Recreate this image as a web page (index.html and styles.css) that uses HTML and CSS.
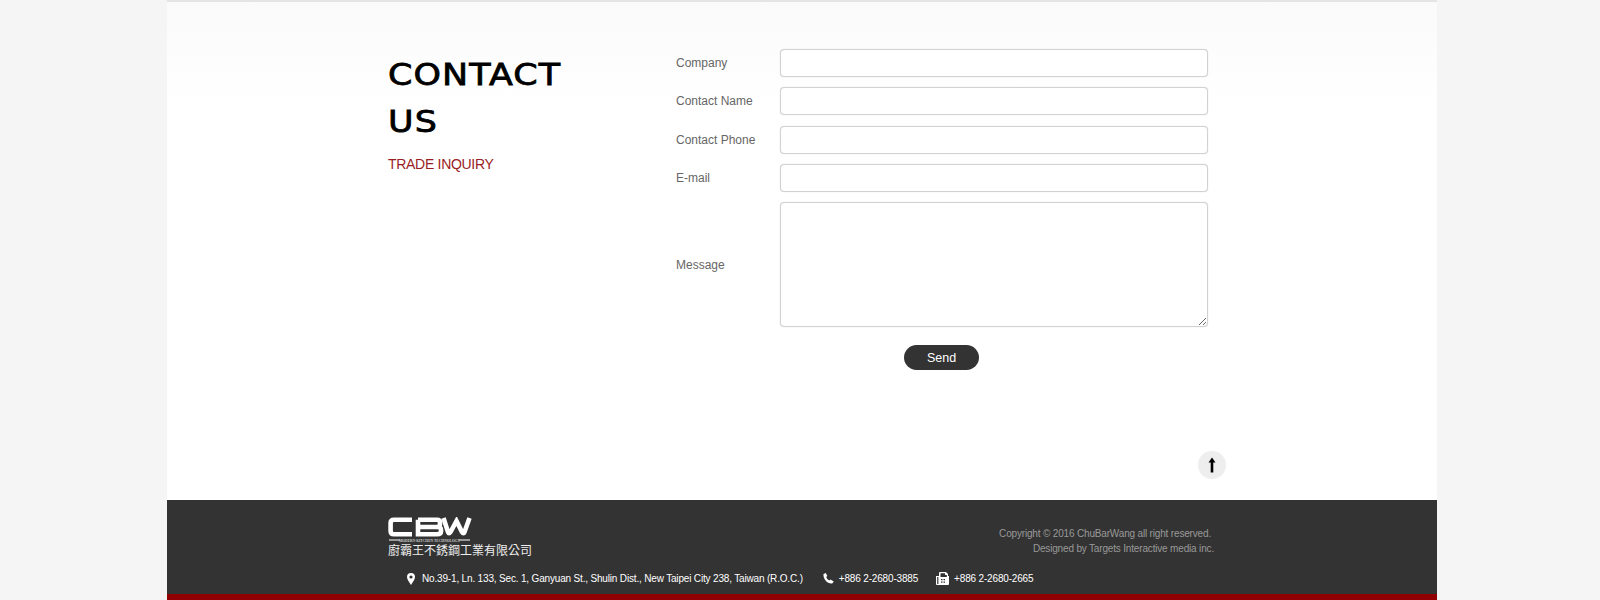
FILE: index.html
```html
<!DOCTYPE html>
<html lang="en">
<head>
    <meta charset="UTF-8">
    <title>Contact Us</title>
    <link rel="stylesheet" href="styles.css">
</head>
<body>

<div class="wrap">
    <div class="content">
        <div class="intro">
            <h1>CONTACT<br>US</h1>
            <p class="sub">TRADE INQUIRY</p>
        </div>
        <form class="form">
            <div class="row">
                <label>Company</label>
                <input type="text">
            </div>
            <div class="row">
                <label>Contact Name</label>
                <input type="text">
            </div>
            <div class="row">
                <label>Contact Phone</label>
                <input type="text">
            </div>
            <div class="row">
                <label>E-mail</label>
                <input type="text">
            </div>
            <div class="row">
                <label>Message</label>
                <textarea></textarea>
            </div>
            <div class="actions">
                <button type="button" class="send">Send</button>
            </div>
        </form>
    </div>
    <div class="top-row">
        <a class="to-top">
            <svg width="8" height="16" viewBox="0 0 8 16">
                <path d="M4 0.500 L7.500 5.500 L5.300 5.500 L5.300 15.500 L2.700 15.500 L2.700 5.500 L0.500 5.500 Z" fill="#000"/>
            </svg>
        </a>
    </div>
    <footer class="footer">
        <div class="footer-top">
            <div class="brand">
                <svg class="logo" width="84" height="26" viewBox="0 0 84 26">
                    <g fill="none" stroke="#fff" stroke-width="4.600">
                        <path d="M24 2.800 H6 Q2.600 2.800 2.600 6 V14 Q2.600 17.200 6 17.200 H24"/>
                        <path d="M30 2.800 H49 Q52 2.800 52 5.500 V7 Q52 10 49 10 H32 M49 10 Q53 10 53 12.500 V14.500 Q53 17.200 49 17.200 H30 V2.800"/>
                        <path d="M55.500 1 L60 15 Q60.800 17.400 62.500 15 L68.500 4 L74 15 Q75.500 17.400 76.500 15 L81.500 1"/>
                    </g>
                    <rect x="1" y="22.500" width="11" height="1" fill="#fff"/>
                    <rect x="71" y="22.500" width="11" height="1" fill="#fff"/>
                    <text x="41.500" y="25" class="logo-small" text-anchor="middle">MODERN KITCHEN TECHNOLOGY</text>
                </svg>
                <div class="brand-name">廚霸王不銹鋼工業有限公司</div>
            </div>
            <div class="copy">
                <p>Copyright © 2016 ChuBarWang all right reserved.</p>
                <p class="designed">Designed by Targets Interactive media inc.</p>
            </div>
        </div>
        <div class="info">
            <svg class="icon-pin" width="8" height="12" viewBox="0 0 8 12">
                <path fill-rule="evenodd" d="M4 0 A4 4 0 0 1 8 4 C8 6.500 5.500 9.500 4 12 C2.500 9.500 0 6.500 0 4 A4 4 0 0 1 4 0 Z M4 2.400 A1.600 1.600 0 1 0 4 5.600 A1.600 1.600 0 1 0 4 2.400 Z" fill="#fff"/>
            </svg>
            <span class="addr">No.39-1, Ln. 133, Sec. 1, Ganyuan St., Shulin Dist., New Taipei City 238, Taiwan (R.O.C.)</span>
            <svg class="icon-phone" width="11" height="11" viewBox="0 0 11 11">
                <path d="M0.500 1 L2.800 0 L4.300 3 L3.200 4 C3.700 5.500 4.800 6.800 6.200 7.500 L7.400 6.500 L10.800 8.500 L9.200 10.500 C4.500 11.200 0 6 0.500 1 Z" fill="#fff"/>
            </svg>
            <span class="tel">+886 2-2680-3885</span>
            <svg class="icon-fax" width="13" height="13" viewBox="0 0 13 13">
                <path fill-rule="evenodd" d="M4 0 H10 L12 2 V4 H13 V12 Q13 13 12 13 H1 Q0 13 0 12 V4 H3 V1 Q3 0 4 0 Z M4.500 1.200 V5 H10.800 V3 H9 V1.200 Z M5 7 V8.200 H6.500 V7 Z M7.500 7 V8.200 H9 V7 Z M5 9.500 V10.700 H6.500 V9.500 Z M7.500 9.500 V10.700 H9 V9.500 Z M1.200 5 V12 H2.400 V5 Z" fill="#fff"/>
            </svg>
            <span class="fax">+886 2-2680-2665</span>
        </div>
    </footer>
</div>

</body>
</html>
```

FILE: styles.css
```css
body {
    margin: 0;
    background-color: #f5f5f5;
    font-family: "Liberation Sans", Arial, sans-serif;
}
.wrap {
    width: 1270px;
    height: 600px;
    margin: 0 0 0 167px;
    background: linear-gradient(#fafafa, #ffffff 100px);
    border-top: 2px solid #e4e4e4;
    box-sizing: border-box;
    display: flex;
    flex-direction: column;
}
.content {
    display: flex;
    padding: 47px 0 0 221px;
    height: 407px;
    box-sizing: border-box;
}
.intro {
    width: 288px;
}
h1 {
    margin: 2px 0 0;
    font-family: "DejaVu Sans", sans-serif;
    font-size: 31px;
    font-weight: normal;
    letter-spacing: 1px;
    -webkit-text-stroke: 0.8px #000;
    line-height: 47px;
    color: #000;
    transform: scaleX(1.125);
    transform-origin: left;
}
.sub {
    margin: 11px 0 0;
    font-size: 14px;
    letter-spacing: -0.3px;
    color: #9a1c24;
}
.form {
    width: 532px;
}
.row {
    display: flex;
    align-items: center;
    margin-bottom: 10.25px;
}
.row label {
    width: 104px;
    font-size: 12px;
    color: #666;
}
.row input, .row textarea {
    width: 428px;
    box-sizing: border-box;
    border: 1px solid #d2d2d2;
    border-radius: 4px;
    background: #fff;
    box-shadow: 0 0 1px rgba(0, 0, 0, 0.2);
    margin: 0;
}
.row input {
    height: 28px;
}
.row textarea {
    height: 125px;
    display: block;
}
.actions {
    padding: 8px 0 0 228px;
}
.send {
    display: block;
    width: 75px;
    height: 25px;
    padding: 0;
    border: none;
    border-radius: 13px;
    background-color: #333;
    color: #fff;
    font-family: "Liberation Sans", Arial, sans-serif;
    font-size: 12.5px;
    font-weight: normal;
}
.top-row {
    display: flex;
    justify-content: flex-end;
    height: 91px;
    padding: 42px 211px 0 0;
    box-sizing: border-box;
}
.to-top {
    width: 28px;
    height: 28px;
    border-radius: 50%;
    background-color: #eee;
    display: flex;
    align-items: center;
    justify-content: center;
}
.footer {
    flex: 1;
    background-color: #333;
    border-bottom: 6px solid #900000;
    padding: 17px 0 0 221px;
    box-sizing: border-box;
}
.footer-top {
    display: flex;
    justify-content: space-between;
    height: 46px;
    width: 823px;
}
.logo {
    display: block;
}
.logo-small {
    font-family: "Liberation Serif", serif;
    font-size: 3.6px;
    font-weight: bold;
    fill: #ccc;
}
.brand-name {
    font-family: "Noto Sans CJK TC", sans-serif;
    font-size: 12px;
    line-height: 14px;
    color: #eee;
}
.copy {
    padding-top: 11px;
    font-size: 10px;
    letter-spacing: -0.17px;
    color: #999;
    text-align: right;
}
.copy p {
    margin: 0 0 3px;
    line-height: 12px;
}
.designed {
    position: relative;
    left: 3px;
}
.info {
    display: flex;
    align-items: center;
    margin: 9px 0 0 19px;
    font-size: 10px;
    letter-spacing: -0.17px;
    color: #fff;
}
.addr {
    margin: 0 20px 0 7px;
}
.tel {
    margin: 0 18px 0 5px;
}
.fax {
    margin-left: 5px;
}
```
